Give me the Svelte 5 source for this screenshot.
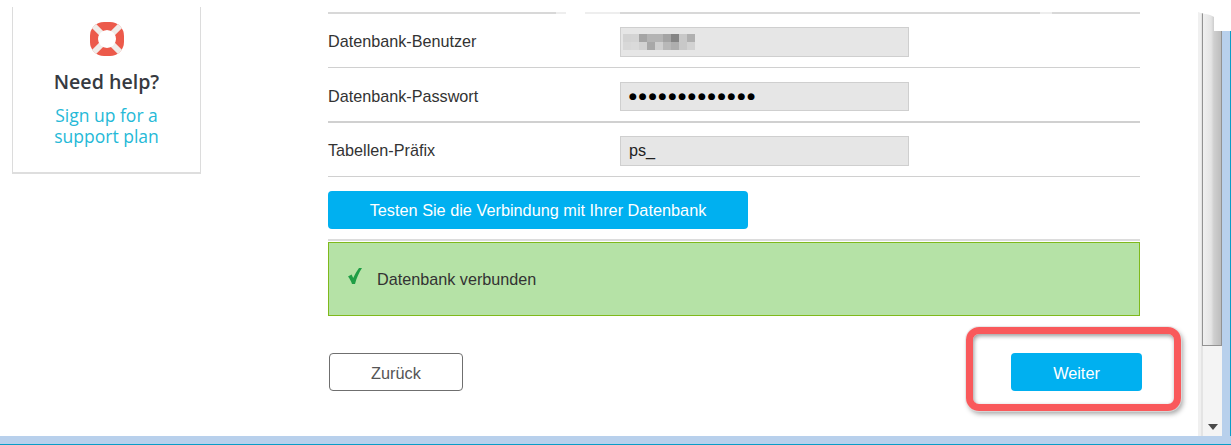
<script>
  // mosaic that hides the database user, two rows of 8px cells
  const mosaic = [
    "#d3d3d3", "#d4d4d4", "#a5a5a5", "#b4b4b4", "#b4b4b4", "#a4a4a4", "#858585", "#c8c8c8", "#b0b0b0",
    "#d8d8d8", "#dadada", "#d2d2d2", "#a8a8a8", "#cfcfcf", "#b8b8b8", "#aeaeae", "#c8c8c8", "#d2d2d2"
  ];
</script>

<div class="window">
  <div class="content">
    <div class="page">
      <aside class="help">
        <svg class="ring" viewBox="0 0 36 36" width="36" height="36" aria-hidden="true">
          <rect x="1" y="1" width="34" height="34" rx="14" fill="#ec5a4b" />
          <path d="M5 5 L31 31 M31 5 L5 31" stroke="#f1ece9" stroke-width="6" />
          <circle cx="18" cy="18" r="9" fill="#fff" />
        </svg>
        <h3>Need help?</h3>
        <a href="#support">Sign up for a<br />support plan</a>
      </aside>

      <main class="form">
        <div class="top-rule"></div>
        <div class="row">
          <span class="label">Datenbank-Benutzer</span>
          <div class="field">
            <div class="mosaic">
              {#each mosaic as color}
                <i style="background: {color}"></i>
              {/each}
            </div>
          </div>
        </div>
        <div class="row second">
          <span class="label">Datenbank-Passwort</span>
          <div class="field short"><span class="dots">●●●●●●●●●●●●●</span></div>
        </div>
        <div class="row">
          <span class="label">Tabellen-Präfix</span>
          <div class="field">ps_</div>
        </div>

        <button class="primary test">Testen Sie die Verbindung mit Ihrer Datenbank</button>
        <div class="rule"></div>

        <div class="alert">
          <svg viewBox="0 0 14 16" width="14" height="16" aria-hidden="true">
            <path d="M0 8.5 L3.6 6.6 L5.2 10 C7 6 9 2.8 11 0 L14 0 C11 4.5 8.6 10 7 16 L4 16 C3 13 1.6 10.5 0 8.5 Z" fill="#1f9e45" />
          </svg>
          <span>Datenbank verbunden</span>
        </div>

        <div class="actions">
          <button class="back">Zurück</button>
          <button class="primary next">Weiter</button>
        </div>
      </main>
    </div>

    <div class="scrollbar">
      <div class="thumb"></div>
      <div class="track"><span class="arrow"></span></div>
    </div>
    <div class="frame-right"></div>
  </div>
  <div class="frame-bottom"></div>

  <div class="callout"></div>
</div>

<style>
  :global(body) {
    margin: 0;
    background: #fff;
    overflow: hidden;
  }

  .window {
    position: relative;
    width: 1231px;
    height: 445px;
    display: flex;
    flex-direction: column;
    font-family: "Liberation Sans", Arial, sans-serif;
    font-size: 16.2px;
    color: #333;
    overflow: hidden;
  }

  .content {
    flex: 1;
    min-height: 0;
    display: flex;
  }

  .page {
    flex: 1;
    display: flex;
    align-items: flex-start;
    padding-left: 12px;
  }

  .help {
    width: 187px;
    height: 165px;
    margin-top: 7px;
    border: 1px solid #dcdcdc;
    border-top: none;
    border-bottom: 2px solid #dedede;
    display: flex;
    flex-direction: column;
    align-items: center;
    font-family: "Open Sans", sans-serif;
    text-align: center;
  }

  .ring {
    margin-top: 14px;
    filter: blur(0.5px);
  }

  .help h3 {
    margin: 13px 0 0;
    font-size: 19.6px;
    line-height: 24px;
    font-weight: 600;
    color: #363a41;
  }

  .help a {
    margin-top: 11px;
    font-size: 17.5px;
    line-height: 21px;
    color: #25b9d7;
    text-decoration: none;
  }

  .form {
    width: 812px;
    margin-left: 127px;
    padding-top: 12px;
  }

  .top-rule {
    height: 2px;
    background: linear-gradient(
      to right,
      #d8d8d8 0 228px,
      #eeeeee 228px 238px,
      #fff 238px 257px,
      #eeeeee 257px 292px,
      #d8d8d8 292px 712px,
      #eeeeee 712px 724px,
      #d8d8d8 724px
    );
  }

  .row {
    height: 51px;
    padding-top: 2px;
    display: flex;
    align-items: center;
    border-bottom: 1px solid #d0d0d0;
  }

  .row.second {
    height: 51px;
    border-bottom: 2px solid #d0d0d0;
  }

  .label {
    width: 292px;
    line-height: 20px;
    margin-top: -2px;
  }

  .second .label {
    margin-top: 1px;
  }

  .field {
    width: 287px;
    height: 28px;
    border: 1px solid #cfcfcf;
    background: #e6e6e6;
    display: flex;
    align-items: center;
    text-indent: 8px;
    color: #222;
  }

  .field.short {
    height: 27px;
    margin-top: 1px;
  }

  .mosaic {
    display: grid;
    grid-template-columns: repeat(9, 8px);
    grid-auto-rows: 8px;
    margin-left: 2px;
  }

  .mosaic i {
    display: block;
  }

  .dots {
    font-family: "DejaVu Sans", sans-serif;
    font-size: 9px;
    letter-spacing: 2px;
    color: #000;
  }

  button {
    font-family: inherit;
    font-size: 16.3px;
    cursor: pointer;
    height: 38px;
    border-radius: 4px;
  }

  .primary {
    border: none;
    background: #00b0f0;
    color: #fff;
  }

  .test {
    display: block;
    width: 420px;
    margin-top: 14px;
  }

  .rule {
    height: 2px;
    margin-top: 10px;
    background: #dcdcdc;
  }

  .alert {
    height: 72px;
    margin-top: 1px;
    padding-left: 19px;
    display: flex;
    align-items: center;
    gap: 15px;
    background: #b5e2a6;
    border: 1px solid #7fb91c;
  }

  .alert svg {
    margin-top: -6px;
  }

  .actions {
    display: flex;
    justify-content: space-between;
    margin: 37px -2px 0 1px;
  }

  .actions button {
    padding-top: 3px;
  }

  .back {
    width: 134px;
    background: #fff;
    border: 1px solid #6f6f6f;
    color: #555;
  }

  .next {
    width: 131px;
  }

  .scrollbar {
    width: 24px;
    display: flex;
    flex-direction: column;
    background: linear-gradient(to right, #f0f0f0 0 3px, #e4e4e4 3px 5px, #f4f4f4 5px);
    clip-path: polygon(0 12px, 3px 13px, 7px 14px, 12px 15px, 16px 17px, 16px 31px, 24px 31px, 24px 100%, 0 100%);
  }

  .thumb {
    height: 346px;
    margin-left: 4px;
    flex: none;
    border: 1px solid #929292;
    border-top: none;
    box-sizing: border-box;
    background: linear-gradient(to right, #f0f0f0, #e4e4e4 45%, #cfcfcf 60%, #bdbdbd);
  }

  .track {
    flex: 1;
    display: flex;
    align-items: flex-end;
    justify-content: center;
    padding-bottom: 6px;
    padding-left: 6px;
  }

  .arrow {
    width: 0;
    height: 0;
    border-left: 5px solid transparent;
    border-right: 5px solid transparent;
    border-top: 6px solid #4a4a4a;
  }

  .frame-right {
    width: 8px;
    margin-top: 31px;
    background: #b8d0ec;
    border-right: 1px solid #0a9dc7;
  }

  .frame-bottom {
    height: 8px;
    flex: none;
    background: #b8d0ec;
    border-bottom: 1px solid #0a9dc7;
  }

  .callout {
    position: absolute;
    left: 966px;
    top: 327px;
    width: 201px;
    height: 70px;
    border: 7px solid #f9595b;
    border-radius: 13px;
    box-shadow: 0 0 0 1px rgba(225, 225, 225, 0.7), 2px 3px 5px rgba(0, 0, 0, 0.35), inset 1px 2px 4px rgba(0, 0, 0, 0.4);
  }
</style>
